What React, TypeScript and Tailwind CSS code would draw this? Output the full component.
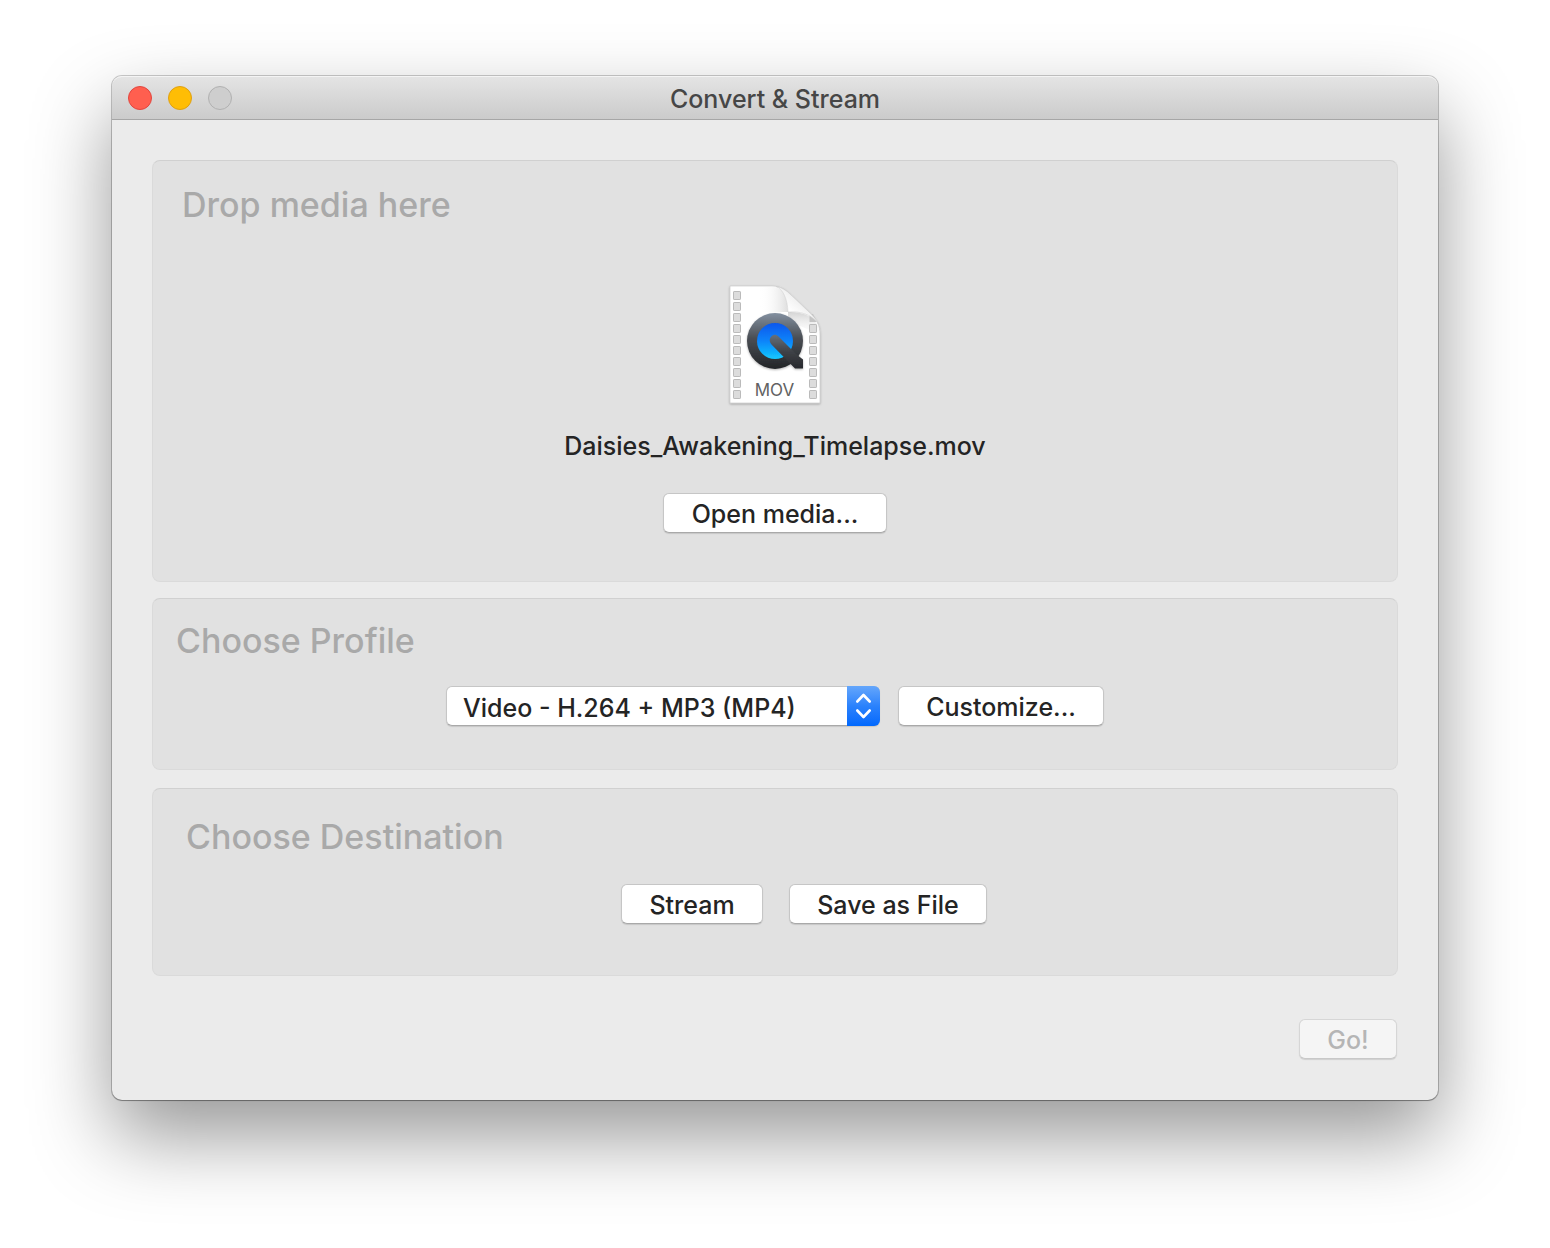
import { useState } from "react";
import type { ButtonHTMLAttributes, ReactNode } from "react";

const PROFILES = [
  "Video - H.264 + MP3 (MP4)",
  "Video - VP80 + Vorbis (Webm)",
  "Video - H.265 + MP3 (MP4)",
  "Audio - MP3",
  "Audio - FLAC",
];

export default function App() {
  const [profile, setProfile] = useState(PROFILES[0]);
  return (
    <div className="min-h-screen overflow-hidden bg-white px-28 pt-19 pb-37 font-['Inter',sans-serif] font-[450] text-[#242424]">
      <main className="rounded-[10px] bg-[#ebebeb] shadow-[0_0_0_1px_rgba(0,0,0,0.2),0_1px_1px_rgba(0,0,0,0.25),0_36px_80px_rgba(0,0,0,0.41)]">
        <TitleBar title="Convert & Stream" />
        <div className="p-10">
          <Panel title="Drop media here" className="px-[29px] pt-[22px] pb-12">
            <div className="flex flex-col items-center">
              <MovIcon />
              <p className="mt-[15px] text-[25px] leading-8">Daisies_Awakening_Timelapse.mov</p>
              <PushButton className="mt-[31px] w-56">Open media...</PushButton>
            </div>
          </Panel>

          <Panel title="Choose Profile" className="mt-4 px-[23px] pt-5 pb-[43px]">
            <div className="mt-[23px] flex justify-center gap-[18px]">
              <div className="relative">
                <select
                  aria-label="Profile"
                  value={profile}
                  onChange={(e) => setProfile(e.target.value)}
                  className="h-10 w-[434px] appearance-none rounded-md border border-[#c6c6c6] border-b-[#a9a9a9] bg-white pt-1 pl-4 text-[25px] leading-8 shadow-[0_1px_1px_rgba(0,0,0,0.12)]"
                >
                  {PROFILES.map((name) => (
                    <option key={name}>{name}</option>
                  ))}
                </select>
                <Stepper />
              </div>
              <PushButton className="w-[206px]">Customize...</PushButton>
            </div>
          </Panel>

          <Panel title="Choose Destination" className="mt-[18px] px-[33px] pt-[26px] pb-[51px]">
            <div className="mt-[25px] flex justify-center gap-[26px] pl-[58px]">
              <PushButton className="w-[142px]">Stream</PushButton>
              <PushButton className="w-[198px]">Save as File</PushButton>
            </div>
          </Panel>

          <div className="mt-[43px] flex justify-end pr-px pb-px">
            <PushButton className="w-[98px]" disabled>Go!</PushButton>
          </div>
        </div>
      </main>
    </div>
  );
}

function TitleBar({ title }: { title: string }) {
  return (
    <header className="grid h-11 grid-cols-[1fr_auto_1fr] items-center rounded-t-[10px] border-t border-b border-t-[#f4f4f4] border-b-[#a6a6a6] bg-linear-to-b from-[#e4e4e4] to-[#cbcbcb] px-4">
      <div className="flex gap-4">
        <button type="button" aria-label="Close" className="size-6 rounded-full border border-[#e2463f] bg-[#ff5f4f]" />
        <button type="button" aria-label="Minimize" className="size-6 rounded-full border border-[#dfa012] bg-[#ffbd05]" />
        <button type="button" aria-label="Zoom" disabled className="size-6 rounded-full border border-[#b1b1b1] bg-[#cecece]" />
      </div>
      <h1 className="pt-0.5 text-[25px] leading-8 font-medium text-[#464646]">{title}</h1>
    </header>
  );
}

function Panel({ title, className, children }: { title: string; className: string; children: ReactNode }) {
  return (
    <section className={`rounded-lg border border-[#dadada] border-t-[#d0d0d0] bg-[#e1e1e1] ${className}`}>
      <h2 className="text-[34px] leading-11 font-medium text-[#a9a9a9]">{title}</h2>
      {children}
    </section>
  );
}

function PushButton({ className, children, ...rest }: ButtonHTMLAttributes<HTMLButtonElement>) {
  return (
    <button
      type="button"
      className={`h-10 rounded-md border border-[#c6c6c6] border-b-[#a9a9a9] bg-white pt-0.5 text-[25px] leading-8 shadow-[0_1px_1px_rgba(0,0,0,0.12)] disabled:border-[#d6d6d6] disabled:border-b-[#c8c8c8] disabled:bg-[#f5f5f5] disabled:text-[#b5b5b5] ${className}`}
      {...rest}
    >
      {children}
    </button>
  );
}

// blue double-arrow cap on the right of the pop-up button
function Stepper() {
  return (
    <span className="pointer-events-none absolute inset-y-0 right-0 flex w-[33px] items-center justify-center rounded-r-md bg-linear-to-b from-[#64a6fb] via-[#2a82fc] to-[#0068fd]">
      <svg width="33" height="40" viewBox="0 0 33 40" fill="none" stroke="#fff" strokeWidth="2.6" strokeLinecap="round" strokeLinejoin="round">
        <path d="M10.3 15.5 16.5 9 22.7 15.5M10.3 24.5 16.5 31 22.7 24.5" />
      </svg>
    </span>
  );
}

const HOLES = Array.from({ length: 10 }, (_, i) => 16 + i * 11);

function MovIcon() {
  return (
    <svg className="mt-12" width="120" height="140" viewBox="0 0 120 140" role="img" aria-label="QuickTime movie">
      <defs>
        <linearGradient id="ring" x1="0" y1="0" x2="0" y2="1">
          <stop offset="0" stopColor="#8390a0" />
          <stop offset="0.45" stopColor="#4a4e54" />
          <stop offset="1" stopColor="#222427" />
        </linearGradient>
        <linearGradient id="lens" x1="0" y1="0" x2="0" y2="1">
          <stop offset="0" stopColor="#0757ec" />
          <stop offset="0.5" stopColor="#0a84fa" />
          <stop offset="1" stopColor="#14c9fe" />
        </linearGradient>
        <linearGradient id="tail" x1="0" y1="0" x2="0" y2="1">
          <stop offset="0" stopColor="#66707b" />
          <stop offset="0.5" stopColor="#3f4247" />
          <stop offset="1" stopColor="#27292c" />
        </linearGradient>
        <linearGradient id="curl" x1="0.1" y1="0.9" x2="0.55" y2="0.45">
          <stop offset="0" stopColor="#e6e6e6" />
          <stop offset="0.5" stopColor="#ffffff" />
          <stop offset="1" stopColor="#f2f2f2" />
        </linearGradient>
        <linearGradient id="fold" x1="0" y1="0" x2="1" y2="0">
          <stop offset="0.5" stopColor="#ffffff" stopOpacity="0" />
          <stop offset="1" stopColor="#dedede" />
        </linearGradient>
        <linearGradient id="under" x1="0" y1="0" x2="0" y2="1">
          <stop offset="0" stopColor="#d4d4d4" />
          <stop offset="1" stopColor="#ffffff" stopOpacity="0" />
        </linearGradient>
        <filter id="soft" x="-20%" y="-20%" width="140%" height="140%">
          <feDropShadow dx="0" dy="1" stdDeviation="0.8" floodOpacity="0.3" />
        </filter>
      </defs>
      <path d="M15 11H57C66 11 71 15 76 20L95 38C102 45 105 50 105 60V128H15Z" fill="#fff" stroke="#c4c4c4" strokeWidth="0.6" filter="url(#soft)" />
      <path d="M16 12H57C67 12 72 19 73 37H16Z" fill="url(#fold)" />
      <path d="M73 37C89 37 101 41 104.5 56V64C98 54 84 50 73 49Z" fill="url(#under)" />
      {HOLES.map((y) => (
        <g key={y} fill="#dcdcdc" stroke="#b4b4b4" strokeWidth="0.9">
          <rect x="18.5" y={y + 0.5} width="7" height="8" rx="0.6" />
          {y > 40 && <rect x="94.5" y={y + 0.5} width="7" height="8" rx="0.6" />}
        </g>
      ))}
      <path d="M94.5 39H98L102 47H94.5Z" fill="#c4c4c4" />
      <path d="M61 11.5C68 14 72.5 24 73 37C84 36 96 38.5 103.5 49C101 44 98 41 94 37L76 20C72 16 67 12.5 61 11.5Z" fill="url(#curl)" stroke="#cacaca" strokeWidth="0.5" />
      <g filter="url(#soft)">
        <circle cx="60" cy="66" r="28" fill="url(#ring)" />
        <circle cx="60" cy="66" r="18" fill="url(#lens)" />
        <path d="M63.5 61.5 81 79L88 84.5V93.5H80L56.5 69.5C51.5 64 58.5 56.5 63.5 61.5Z" fill="url(#tail)" />
      </g>
      <text x="59.5" y="121" textAnchor="middle" fontFamily="Inter, sans-serif" fontSize="17" fontWeight="400" fill="#626262">MOV</text>
    </svg>
  );
}
